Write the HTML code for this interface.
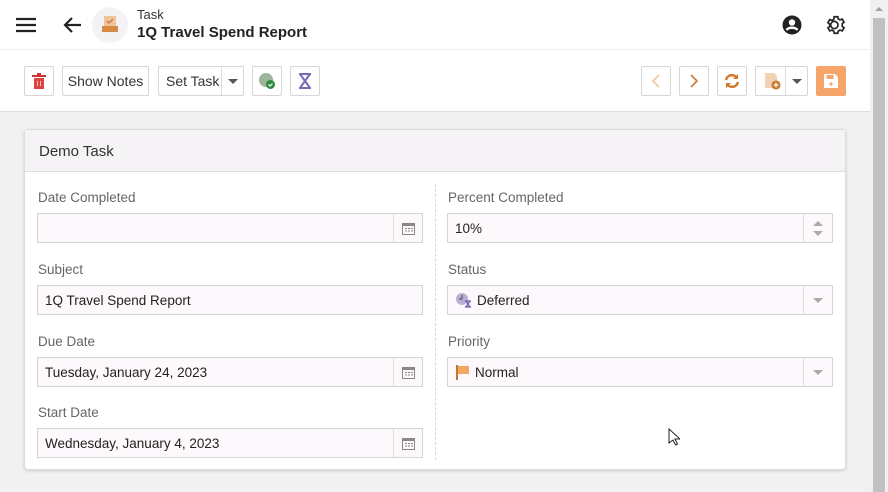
<!DOCTYPE html>
<html><head><style>
*{box-sizing:border-box;margin:0;padding:0}
body{width:888px;height:492px;overflow:hidden;background:#f1f1f1;font-family:"Liberation Sans",sans-serif;font-size:14px;color:#333;position:relative}
.hdr{position:absolute;left:0;top:0;width:870px;height:50px;background:#fff;border-bottom:1px solid #eee}
.tb{position:absolute;left:0;top:50px;width:870px;height:62px;background:#fff;border-bottom:1px solid #ddd}
.btn{position:absolute;top:66px;height:30px;border:1px solid #d6d6d6;background:#fff;border-radius:2px;font-size:14px;color:#333;display:flex;align-items:center;justify-content:center}
.sb{position:absolute;left:870px;top:0;width:18px;height:492px;background:#f0f0f0}
.thumb{position:absolute;left:873px;top:18px;width:12px;height:474px;background:#c1c1c1}
.card{position:absolute;left:24px;top:129px;width:822px;height:341px;background:#fff;border:1px solid #ddd;border-radius:4px;box-shadow:0 1px 3px rgba(0,0,0,.15)}
.ch{height:42px;background:#f5f3f5;border-bottom:1px solid #ddd;padding:13px 14px;font-size:15px;color:#333}
.lbl{position:absolute;font-size:13.5px;color:#666}
.inp{position:absolute;height:30px;border:1px solid #d4d4d4;background:#fdf8fb;font-size:13.5px;color:#222;padding:7px 7px;display:flex;align-items:center}
.ib{position:absolute;right:0;top:0;width:29px;height:28px;border-left:1px solid #ddd;display:flex;align-items:center;justify-content:center}
.tri{width:0;height:0;border-left:5px solid transparent;border-right:5px solid transparent;border-top:5px solid #999}
</style></head><body>
<div class="hdr">
 <svg style="position:absolute;left:16px;top:17px" width="20" height="16"><path d="M0 2h20M0 8h20M0 14h20" stroke="#222" stroke-width="2.2"/></svg>
 <svg style="position:absolute;left:62px;top:15px" width="20" height="20"><path d="M19 10H3M10 3L3 10l7 7" stroke="#222" stroke-width="2.2" fill="none"/></svg>
 <div style="position:absolute;left:92px;top:7px;width:36px;height:36px;border-radius:50%;background:#f5f2f6"></div>
 <svg style="position:absolute;left:101px;top:15px" width="18" height="18"><rect x="3" y="1" width="12" height="11" fill="#f0c49a"/><path d="M6 6l2 2 4-4" stroke="#c77a3a" stroke-width="1.3" fill="none"/><rect x="1" y="11" width="16" height="6" fill="#d88a45"/></svg>
 <div style="position:absolute;left:137px;top:7px;font-size:13px;color:#333">Task</div>
 <div style="position:absolute;left:137px;top:24px;font-size:15px;font-weight:bold;color:#222">1Q Travel Spend Report</div>
 <svg style="position:absolute;left:782px;top:15px" width="20" height="20"><circle cx="10" cy="10" r="9.5" fill="#222"/><circle cx="10" cy="7.5" r="3.2" fill="#fff"/><path d="M4.5 15c2-3 9-3 11 0" stroke="#fff" stroke-width="2.4" fill="none"/></svg>
 <svg style="position:absolute;left:825px;top:14px" width="22" height="22" viewBox="0 0 24 24"><path d="M12 8a4 4 0 100 8 4 4 0 000-8zm8.6 5.5l2 1.6-2 3.4-2.4-1a8 8 0 01-2 1.2L15.8 21h-4l-.4-2.3a8 8 0 01-2-1.2l-2.4 1-2-3.4 2-1.6a8 8 0 010-2.4l-2-1.6 2-3.4 2.4 1a8 8 0 012-1.2L11.8 3h4l.4 2.3a8 8 0 012 1.2l2.4-1 2 3.4-2 1.6a8 8 0 010 2.4z" transform="translate(-1.8 0)" fill="none" stroke="#222" stroke-width="1.8"/></svg>
</div>
<div class="tb"></div>
<div class="btn" style="left:24px;width:30px"><svg width="14" height="16"><rect x="0" y="2" width="14" height="2" fill="#c33"/><rect x="5" y="0" width="4" height="2" fill="#c33"/><rect x="2" y="5" width="10" height="11" fill="#d44"/><path d="M5.5 8v5M8.5 8v5" stroke="#fbb" stroke-width="1"/></svg></div>
<div class="btn" style="left:62px;width:87px">Show Notes</div>
<div class="btn" style="left:158px;width:86px;justify-content:flex-start;padding-left:7px">Set Task<div style="position:absolute;left:62px;top:0;width:1px;height:28px;background:#ddd"></div><div class="tri" style="position:absolute;left:69px;top:12px;border-top-color:#555"></div></div>
<div class="btn" style="left:252px;width:30px"><svg width="18" height="18"><circle cx="8" cy="8" r="7" fill="#9cb59c"/><circle cx="12.5" cy="12.5" r="4.5" fill="#2e8b3e"/><path d="M10.5 12.5l1.5 1.5 2.5-2.5" stroke="#fff" stroke-width="1.2" fill="none"/></svg></div>
<div class="btn" style="left:290px;width:30px"><svg width="14" height="16"><path d="M1 1h12M1 15h12M2 1l10 14M12 1L2 15" stroke="#7b6bb5" stroke-width="2"/></svg></div>
<div class="btn" style="left:641px;width:30px"><svg width="10" height="16"><path d="M8 2L2 8l6 6" stroke="#f0c9a5" stroke-width="1.8" fill="none"/></svg></div>
<div class="btn" style="left:679px;width:30px"><svg width="10" height="16"><path d="M2 2l6 6-6 6" stroke="#d0803a" stroke-width="1.8" fill="none"/></svg></div>
<div class="btn" style="left:717px;width:30px"><svg width="16" height="16"><path d="M2 7a6 6 0 0111-2M14 9a6 6 0 01-11 2" stroke="#d0762a" stroke-width="2.4" fill="none"/><path d="M14 1v5h-5zM2 15v-5h5z" fill="#d0762a"/></svg></div>
<div class="btn" style="left:755px;width:53px;justify-content:flex-start;padding-left:7px"><svg width="18" height="18"><path d="M2 1h9l3 3v12H2z" fill="#f2d2b2"/><circle cx="13" cy="13" r="4.5" fill="#c8742c"/><path d="M13 10.5v5M10.5 13h5" stroke="#fff" stroke-width="1.2"/></svg><div style="position:absolute;left:29px;top:0;width:1px;height:28px;background:#ddd"></div><div class="tri" style="position:absolute;left:36px;top:12px;border-top-color:#555"></div></div>
<div class="btn" style="left:816px;width:30px;background:#f5a56a;border-color:#f5a56a"><svg width="16" height="16"><path d="M1 1h11l3 3v11H1z" fill="#fff"/><rect x="3.5" y="2" width="7" height="4" fill="#f5a56a"/><circle cx="8" cy="11" r="1.6" fill="#f5a56a"/></svg></div>
<div class="card"><div class="ch">Demo Task</div>
 <div style="position:absolute;left:410px;top:54px;height:276px;border-left:1px dashed #d8d8d8"></div>
</div>
<div class="lbl" style="left:38px;top:190px">Date Completed</div>
<div class="inp" style="left:37px;top:213px;width:386px"><div class="ib"><svg width="13" height="13"><rect x=".5" y="1.5" width="12" height="11" fill="none" stroke="#888"/><rect x="0" y="1" width="13" height="3" fill="#888"/><path d="M3 6.5h2M6 6.5h2M9 6.5h2M3 9h2M6 9h2M9 9h2" stroke="#888"/></svg></div></div>
<div class="lbl" style="left:38px;top:262px">Subject</div>
<div class="inp" style="left:37px;top:285px;width:386px">1Q Travel Spend Report</div>
<div class="lbl" style="left:38px;top:334px">Due Date</div>
<div class="inp" style="left:37px;top:357px;width:386px">Tuesday, January 24, 2023<div class="ib"><svg width="13" height="13"><rect x=".5" y="1.5" width="12" height="11" fill="none" stroke="#888"/><rect x="0" y="1" width="13" height="3" fill="#888"/><path d="M3 6.5h2M6 6.5h2M9 6.5h2M3 9h2M6 9h2M9 9h2" stroke="#888"/></svg></div></div>
<div class="lbl" style="left:38px;top:405px">Start Date</div>
<div class="inp" style="left:37px;top:428px;width:386px">Wednesday, January 4, 2023<div class="ib"><svg width="13" height="13"><rect x=".5" y="1.5" width="12" height="11" fill="none" stroke="#888"/><rect x="0" y="1" width="13" height="3" fill="#888"/><path d="M3 6.5h2M6 6.5h2M9 6.5h2M3 9h2M6 9h2M9 9h2" stroke="#888"/></svg></div></div>
<div class="lbl" style="left:448px;top:190px">Percent Completed</div>
<div class="inp" style="left:447px;top:213px;width:386px">10%<div class="ib" style="flex-direction:column;gap:5px"><div class="tri" style="transform:rotate(180deg);border-top-color:#aaa"></div><div class="tri" style="border-top-color:#aaa"></div></div></div>
<div class="lbl" style="left:448px;top:262px">Status</div>
<div class="inp" style="left:447px;top:285px;width:386px"><svg width="18" height="16" style="margin-right:4px"><circle cx="7" cy="7" r="6" fill="#b7b0d4"/><path d="M7 3v4H4" stroke="#444" stroke-width="1" fill="none"/><path d="M10 9h6M10 15h6M11 9l4 6M15 9l-4 6" stroke="#6b5bb0" stroke-width="1.3"/></svg>Deferred<div class="ib"><div class="tri" style="border-top-color:#aaa"></div></div></div>
<div class="lbl" style="left:448px;top:334px">Priority</div>
<div class="inp" style="left:447px;top:357px;width:386px"><svg width="16" height="16" style="margin-right:4px"><rect x="1" y="1" width="2" height="15" fill="#c8742c"/><path d="M3 2h11v8H3z" fill="#f0a860"/></svg>Normal<div class="ib"><div class="tri" style="border-top-color:#aaa"></div></div></div>
<svg style="position:absolute;left:668px;top:428px" width="12" height="19"><path d="M1 1v14l4-3 2.5 5 2-1-2.5-5h5z" fill="#fff" stroke="#222" stroke-width="1"/></svg>
<div class="sb"></div><div class="thumb"></div>
<svg style="position:absolute;left:874px;top:6px" width="10" height="6"><path d="M1 5l4-4 4 4z" fill="#a0a0a0"/></svg>
</body></html>
